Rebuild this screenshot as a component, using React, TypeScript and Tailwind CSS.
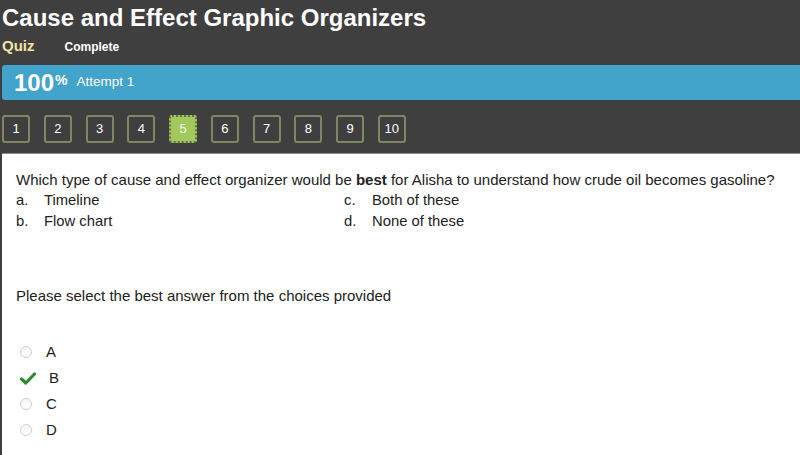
import React from "react";

const nums = [1, 2, 3, 4, 5, 6, 7, 8, 9, 10];

function Radio() {
  return (
    <span className="inline-block h-[12px] w-[12px] rounded-full border border-[#cfcfcf] bg-gradient-to-b from-[#f4f4f4] to-[#ffffff]" />
  );
}

function Check() {
  return (
    <svg width="16" height="13" viewBox="0 0 16 13">
      <path d="M1.5 7 L5.8 11 L14.5 2" stroke="#2f8a2a" strokeWidth="3.2" fill="none" strokeLinecap="round" strokeLinejoin="round" />
    </svg>
  );
}

export default function App() {
  return (
    <div className="w-[800px] h-[455px] overflow-hidden bg-[#3f3f3f] flex flex-col" style={{ fontFamily: '"Liberation Sans", Arial, sans-serif' }}>
      <div className="pl-[2px] pt-[4px] h-[34px] text-[24px] leading-[28px] font-bold text-white">Cause and Effect Graphic Organizers</div>
      <div className="flex items-baseline pl-[2px] h-[31px] pt-[1px]">
        <span className="text-[15px] font-bold text-[#f3e3a6]">Quiz</span>
        <span className="ml-[30px] text-[12px] font-bold text-white">Complete</span>
      </div>
      <div className="ml-[2px] h-[35px] rounded-l-[3px] bg-[#42a3cb] flex items-center pl-[12px]">
        <span className="text-[24px] font-bold text-white leading-none">100</span>
        <span className="text-[14px] font-bold text-white self-start mt-[5px] ml-[1px]">%</span>
        <span className="ml-[9px] text-[13.5px] text-white">Attempt 1</span>
      </div>
      <div className="flex gap-[13.75px] pl-[2px] pt-[15px] h-[53px]">
        {nums.map((n) => (
          <div
            key={n}
            className={
              n === 5
                ? "w-[28px] h-[28px] rounded-[3px] border-2 border-dotted border-[#66704f] bg-[#a3c85b] text-[#f2f7e6] flex items-center justify-center text-[13px]"
                : "w-[28px] h-[28px] rounded-[3px] border-2 border-[#7e8762] bg-[#3f3f3f] text-white flex items-center justify-center text-[13px]"
            }
          >
            {n}
          </div>
        ))}
      </div>
      <div className="flex-1 ml-[2px] bg-white border-t border-[#8a8a8a] text-[#222] pl-[14px] pt-[15px]">
        <div className="text-[15px] leading-[21px]">
          Which type of cause and effect organizer would be <b>best</b> for Alisha to understand how crude oil becomes gasoline?
        </div>
        <div className="grid grid-cols-[328px_1fr] text-[14.8px] leading-[21px]">
          <div className="flex"><span className="w-[28px]">a.</span>Timeline</div>
          <div className="flex"><span className="w-[28px]">c.</span>Both of these</div>
          <div className="flex"><span className="w-[28px]">b.</span>Flow chart</div>
          <div className="flex"><span className="w-[28px]">d.</span>None of these</div>
        </div>
        <div className="mt-[53px] text-[15px] leading-[21px]">Please select the best answer from the choices provided</div>
        <div className="mt-[33px] flex flex-col">
          {["A", "B", "C", "D"].map((l) => (
            <div key={l} className="flex items-center h-[26px]">
              <span className="w-[18px] ml-[4px] flex items-center">
                {l === "B" ? <Check /> : <Radio />}
              </span>
              <span className={l === "B" ? "ml-[11px] text-[15px]" : "ml-[8px] text-[15px]"}>{l}</span>
            </div>
          ))}
        </div>
      </div>
    </div>
  );
}
